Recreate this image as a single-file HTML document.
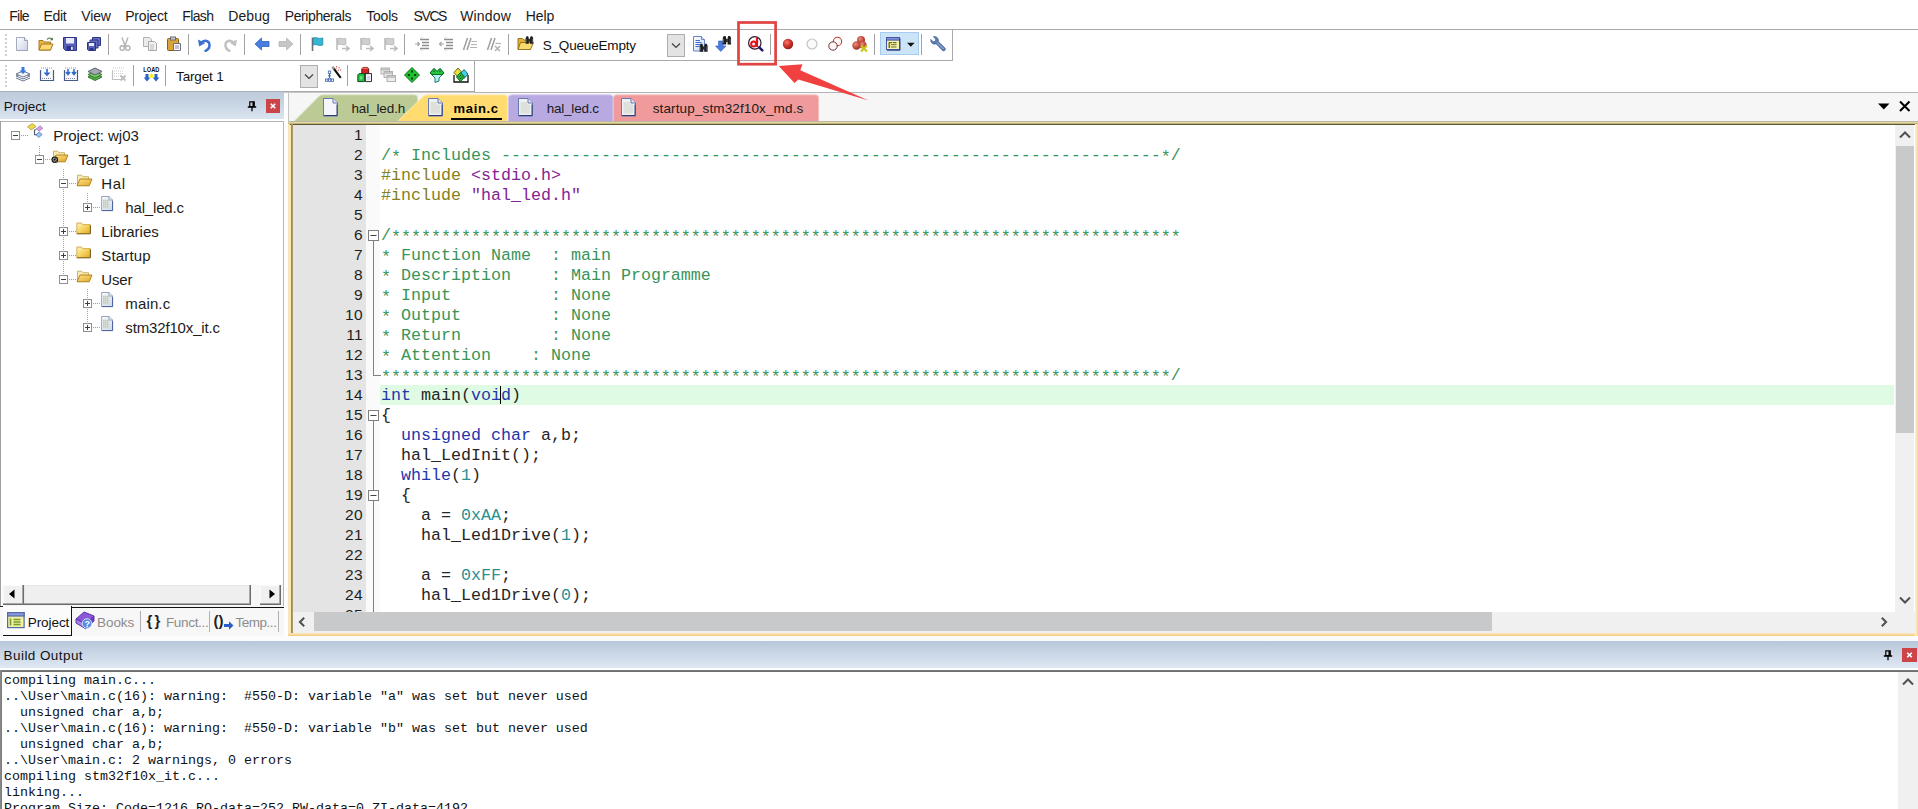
<!DOCTYPE html>
<html><head><meta charset="utf-8"><title>uVision</title><style>
html,body{margin:0;padding:0;background:#fff;}
body{width:1918px;height:809px;overflow:hidden;position:relative;font-family:"Liberation Sans",sans-serif;}
.t{position:absolute;white-space:pre;display:block;}
.b{position:absolute;display:block;box-sizing:border-box;}
.a{position:relative;top:2px;}
</style></head><body>
<svg width="0" height="0" style="position:absolute;left:0;top:0"><defs><linearGradient id="ng" x1="0" y1="0" x2="1" y2="1"><stop offset="0" stop-color="#fff"/><stop offset="1" stop-color="#cdd2e6"/></linearGradient><linearGradient id="dg" x1="0" y1="0" x2="1" y2="1"><stop offset="0" stop-color="#fff"/><stop offset="1" stop-color="#c4d8f6"/></linearGradient><radialGradient id="rb" cx=".38" cy=".35" r=".7"><stop offset="0" stop-color="#f08070"/><stop offset=".5" stop-color="#d0352c"/><stop offset="1" stop-color="#8e1a14"/></radialGradient><radialGradient id="rb2" cx=".38" cy=".35" r=".7"><stop offset="0" stop-color="#e89080"/><stop offset=".6" stop-color="#c4483c"/><stop offset="1" stop-color="#943024"/></radialGradient><linearGradient id="fo" x1="0" y1="0" x2="1" y2="1"><stop offset="0" stop-color="#fde58a"/><stop offset="1" stop-color="#e2a426"/></linearGradient><linearGradient id="fi" x1="0" y1="0" x2="1" y2="1"><stop offset="0" stop-color="#fbfcfe"/><stop offset="1" stop-color="#cfdaee"/></linearGradient><linearGradient id="fc" x1="0" y1="0" x2="1" y2="1"><stop offset="0" stop-color="#fff4c0"/><stop offset=".5" stop-color="#f6d560"/><stop offset="1" stop-color="#e4a82a"/></linearGradient></defs></svg>
<span class="t" style="left:9.20px;top:9.02px;font-size:14px;line-height:14px;color:#1a1a1a;letter-spacing:-0.715px;">File</span>
<span class="t" style="left:43.60px;top:9.02px;font-size:14px;line-height:14px;color:#1a1a1a;letter-spacing:-0.331px;">Edit</span>
<span class="t" style="left:81.20px;top:9.02px;font-size:14px;line-height:14px;color:#1a1a1a;letter-spacing:-0.098px;">View</span>
<span class="t" style="left:125.20px;top:9.02px;font-size:14px;line-height:14px;color:#1a1a1a;letter-spacing:-0.196px;">Project</span>
<span class="t" style="left:182.20px;top:9.02px;font-size:14px;line-height:14px;color:#1a1a1a;letter-spacing:-0.607px;">Flash</span>
<span class="t" style="left:228.20px;top:9.02px;font-size:14px;line-height:14px;color:#1a1a1a;letter-spacing:0.089px;">Debug</span>
<span class="t" style="left:284.80px;top:9.02px;font-size:14px;line-height:14px;color:#1a1a1a;letter-spacing:-0.420px;">Peripherals</span>
<span class="t" style="left:366.20px;top:9.02px;font-size:14px;line-height:14px;color:#1a1a1a;letter-spacing:-0.197px;">Tools</span>
<span class="t" style="left:413.60px;top:9.02px;font-size:14px;line-height:14px;color:#1a1a1a;letter-spacing:-1.431px;">SVCS</span>
<span class="t" style="left:460.20px;top:9.02px;font-size:14px;line-height:14px;color:#1a1a1a;letter-spacing:0.168px;">Window</span>
<span class="t" style="left:525.70px;top:9.02px;font-size:14px;line-height:14px;color:#1a1a1a;letter-spacing:-0.086px;">Help</span>
<div class="b" style="left:0px;top:29px;width:1918px;height:1px;background:#a9a9a9"></div>
<div class="b" style="left:0px;top:60px;width:953px;height:1px;background:#a9a9a9"></div>
<div class="b" style="left:952px;top:29px;width:1px;height:32px;background:#a9a9a9"></div>
<div class="b" style="left:0px;top:91px;width:474px;height:1px;background:#a9a9a9"></div>
<div class="b" style="left:474px;top:61px;width:1px;height:31px;background:#a9a9a9"></div>
<div class="b" style="left:474px;top:92px;width:1444px;height:1px;background:#b4b4b4"></div>
<div class="b" style="left:0px;top:92px;width:474px;height:1px;background:#c8c8c8"></div>
<div class="b" style="left:5px;top:34px;width:2px;height:2px;background:#cdcdcd"></div>
<div class="b" style="left:5px;top:38px;width:2px;height:2px;background:#cdcdcd"></div>
<div class="b" style="left:5px;top:42px;width:2px;height:2px;background:#cdcdcd"></div>
<div class="b" style="left:5px;top:46px;width:2px;height:2px;background:#cdcdcd"></div>
<div class="b" style="left:5px;top:50px;width:2px;height:2px;background:#cdcdcd"></div>
<div class="b" style="left:5px;top:54px;width:2px;height:2px;background:#cdcdcd"></div>
<div class="b" style="left:5px;top:65px;width:2px;height:2px;background:#cdcdcd"></div>
<div class="b" style="left:5px;top:69px;width:2px;height:2px;background:#cdcdcd"></div>
<div class="b" style="left:5px;top:73px;width:2px;height:2px;background:#cdcdcd"></div>
<div class="b" style="left:5px;top:77px;width:2px;height:2px;background:#cdcdcd"></div>
<div class="b" style="left:5px;top:81px;width:2px;height:2px;background:#cdcdcd"></div>
<div class="b" style="left:5px;top:85px;width:2px;height:2px;background:#cdcdcd"></div>
<div class="b" style="left:108px;top:34px;width:1px;height:21px;background:#a2a2a2"></div>
<div class="b" style="left:188px;top:34px;width:1px;height:21px;background:#a2a2a2"></div>
<div class="b" style="left:244px;top:34px;width:1px;height:21px;background:#a2a2a2"></div>
<div class="b" style="left:300px;top:34px;width:1px;height:21px;background:#a2a2a2"></div>
<div class="b" style="left:404px;top:34px;width:1px;height:21px;background:#a2a2a2"></div>
<div class="b" style="left:508px;top:34px;width:1px;height:21px;background:#a2a2a2"></div>
<div class="b" style="left:770px;top:34px;width:1px;height:21px;background:#a2a2a2"></div>
<div class="b" style="left:874px;top:34px;width:1px;height:21px;background:#a2a2a2"></div>
<div class="b" style="left:921px;top:34px;width:1px;height:21px;background:#a2a2a2"></div>
<div class="b" style="left:133px;top:65px;width:1px;height:21px;background:#a2a2a2"></div>
<div class="b" style="left:165px;top:65px;width:1px;height:21px;background:#a2a2a2"></div>
<div class="b" style="left:347px;top:65px;width:1px;height:21px;background:#a2a2a2"></div>
<svg class="b" style="left:14px;top:36px" width="16" height="16" viewBox="0 0 16 16"><path d="M2.5 1.500h8l3 3v10h-11z" fill="url(#ng)" stroke="#a4a9bc"/><path d="M10.5 1.500v3h3" fill="#eceff8" stroke="#9aa0b4"/><path d="M3 14.500h10.500v-9" fill="none" stroke="#9ea4bc"/></svg>
<svg class="b" style="left:38px;top:36px" width="16" height="16" viewBox="0 0 16 16"><path d="M1 4.5h4l1.5 1.5h6v8h-11.5z" fill="#e8b64a" stroke="#a87a1c"/><path d="M3.5 8h11.5l-2.5 6h-11.5z" fill="#fbd977" stroke="#a87a1c"/><path d="M9 3.5c1.5-2 4-2 5 0" fill="none" stroke="#3a6e3a" stroke-width="1.2"/><path d="M14.8 1.5v2.8h-2.8z" fill="#3a6e3a"/></svg>
<svg class="b" style="left:62px;top:36px" width="16" height="16" viewBox="0 0 16 16"><path d="M1.5 1.5h13v13h-11l-2-2z" fill="#5660b8" stroke="#2c3486"/><rect x="4" y="2" width="8" height="5.5" fill="#e8ecfb"/><rect x="4.5" y="10" width="7" height="4.5" fill="#2c3486"/><rect x="9" y="10.8" width="1.8" height="3" fill="#e8ecfb"/></svg>
<svg class="b" style="left:86px;top:36px" width="16" height="16" viewBox="0 0 16 16"><path d="M6.5 1.5h8v8h-8z" fill="#6870c0" stroke="#2c3486"/><path d="M4 4h8v8h-8z" fill="#6870c0" stroke="#2c3486"/><path d="M1.5 6.5h8v8h-7l-1-1z" fill="#5660b8" stroke="#2c3486"/><rect x="3" y="7" width="5" height="3" fill="#e8ecfb"/><rect x="3.5" y="12" width="4" height="2.5" fill="#2c3486"/></svg>
<svg class="b" style="left:117px;top:36px" width="16" height="16" viewBox="0 0 16 16"><path d="M5 1.5l3 8 3-8" fill="none" stroke="#b4b4b4" stroke-width="1.4"/><circle cx="5.2" cy="12" r="2.2" fill="none" stroke="#b4b4b4" stroke-width="1.4"/><circle cx="10.8" cy="12" r="2.2" fill="none" stroke="#b4b4b4" stroke-width="1.4"/><path d="M8 9.5l-2 1.2M8 9.5l2 1.2" stroke="#b4b4b4" stroke-width="1.4"/></svg>
<svg class="b" style="left:142px;top:36px" width="16" height="16" viewBox="0 0 16 16"><path d="M1.5 1.5h6l2 2v7h-8z" fill="#ececec" stroke="#b0b0b0"/><path d="M6.5 5.5h6l2 2v7h-8z" fill="#f2f2f2" stroke="#a8a8a8"/><path d="M8 9h4M8 11h4M8 13h4" stroke="#bcbcbc"/></svg>
<svg class="b" style="left:166px;top:36px" width="16" height="16" viewBox="0 0 16 16"><rect x="1.5" y="2.5" width="11" height="12" rx="1" fill="#d9a43a" stroke="#8a5d12"/><rect x="4.5" y="1" width="5" height="3" fill="#c8c8d0" stroke="#6c6c78"/><path d="M7.5 7.5h7v7h-7z" fill="#f6f6fa" stroke="#70707c"/><path d="M9 10h4M9 12h4" stroke="#8a8fb0"/></svg>
<svg class="b" style="left:197px;top:36px" width="16" height="16" viewBox="0 0 16 16"><path d="M4 7.5c3-4.5 9-3 8.5 2.5c-.3 2.5-2 4-4 4.8" fill="none" stroke="#3b6fd0" stroke-width="2.4" stroke-linecap="round"/><path d="M1 3.5l1.2 7 6-3.6z" fill="#3b6fd0"/></svg>
<svg class="b" style="left:222px;top:36px" width="16" height="16" viewBox="0 0 16 16"><path d="M12 7.5c-3-4.5-9-3-8.5 2.5c.3 2.5 2 4 4 4.8" fill="none" stroke="#c2c2c2" stroke-width="2.4" stroke-linecap="round"/><path d="M15 3.5l-1.2 7-6-3.6z" fill="#c2c2c2"/></svg>
<svg class="b" style="left:254px;top:36px" width="16" height="16" viewBox="0 0 16 16"><path d="M1 8l6.5-6v3.5h7.5v5h-7.5v3.500z" fill="#4a7fe0" stroke="#2f5fc0" stroke-width=".8"/></svg>
<svg class="b" style="left:278px;top:36px" width="16" height="16" viewBox="0 0 16 16"><path d="M15 8l-6.5-6v3.500h-7.500v5h7.500v3.500z" fill="#c6c6c6" stroke="#b6b6b6" stroke-width=".8"/></svg>
<svg class="b" style="left:309px;top:36px" width="16" height="16" viewBox="0 0 16 16"><path d="M3.5 1.500v13.5" stroke="#6a7078" stroke-width="1.6"/><path d="M4.3 2c3-1.5 5 1.5 9.5 0v7c-4.5 1.5-6.5-1.5-9.5 0z" fill="#35b6d2" stroke="#1c8aa6" stroke-width=".8"/></svg>
<svg class="b" style="left:334px;top:36px" width="16" height="16" viewBox="0 0 16 16"><path d="M3 2v12" stroke="#b8b8b8" stroke-width="1.5"/><path d="M3.8 2.500c2.5-1.2 4.5 1.2 8 0v6c-3.5 1.2-5.5-1.2-8 0z" fill="#cfcfcf" stroke="#b4b4b4" stroke-width=".8"/><path d="M8 12.500h7M12 10l3 2.5-3 2.5" fill="none" stroke="#bdbdbd" stroke-width="1.6"/></svg>
<svg class="b" style="left:358px;top:36px" width="16" height="16" viewBox="0 0 16 16"><path d="M3 2v12" stroke="#b8b8b8" stroke-width="1.5"/><path d="M3.8 2.500c2.5-1.2 4.5 1.2 8 0v6c-3.5 1.2-5.5-1.2-8 0z" fill="#cfcfcf" stroke="#b4b4b4" stroke-width=".8"/><path d="M8 12.500h7M12 10l3 2.5-3 2.5" fill="none" stroke="#bdbdbd" stroke-width="1.6"/></svg>
<svg class="b" style="left:382px;top:36px" width="16" height="16" viewBox="0 0 16 16"><path d="M3 2v12" stroke="#b8b8b8" stroke-width="1.5"/><path d="M3.8 2.500c2.5-1.2 4.5 1.2 8 0v6c-3.5 1.2-5.5-1.2-8 0z" fill="#cfcfcf" stroke="#b4b4b4" stroke-width=".8"/><path d="M8 12.500h7M12 10l3 2.5-3 2.5" fill="none" stroke="#bdbdbd" stroke-width="1.6"/></svg>
<svg class="b" style="left:414px;top:36px" width="16" height="16" viewBox="0 0 16 16"><path d="M6 3.500h9M8 6.500h7M8 9.500h7M6 12.500h9" stroke="#8e8e8e" stroke-width="1.3"/><path d="M1 8h4M3.5 6l2 2-2 2" fill="none" stroke="#a4a4a4" stroke-width="1.2"/><path d="M8 1v1M8 14v1" stroke="#c4c4c4"/></svg>
<svg class="b" style="left:438px;top:36px" width="16" height="16" viewBox="0 0 16 16"><path d="M6 3.500h9M8 6.500h7M8 9.500h7M6 12.500h9" stroke="#8e8e8e" stroke-width="1.3"/><path d="M6 8h-4M3.5 6l-2 2 2 2" fill="none" stroke="#a4a4a4" stroke-width="1.2"/><path d="M8 1v1M8 14v1" stroke="#c4c4c4"/></svg>
<svg class="b" style="left:462px;top:36px" width="16" height="16" viewBox="0 0 16 16"><path d="M1.5 14l4-12M5 14l4-12" stroke="#9e9e9e" stroke-width="1.5"/><path d="M9.5 5.500h5.500M9 8.500h6M8 11.500h7" stroke="#b4b4b4" stroke-width="1.2"/></svg>
<svg class="b" style="left:486px;top:36px" width="16" height="16" viewBox="0 0 16 16"><path d="M1.5 14l4-12M5 14l4-12" stroke="#9e9e9e" stroke-width="1.5"/><path d="M9.5 7.500h5.5" stroke="#b4b4b4" stroke-width="1.2"/><path d="M9 10l5 5M14 10l-5 5" stroke="#b0b0b0" stroke-width="1.5"/></svg>
<svg class="b" style="left:517px;top:35px" width="18" height="17" viewBox="0 0 18 17"><path d="M1 3.500h4.500l1.5 1.500h6.500v9h-12.500z" fill="#e2b43a" stroke="#8a6a14" stroke-width=".9"/><path d="M3.5 7.500h13l-3 7h-12.500z" fill="#f6dc6c" stroke="#8a6a14" stroke-width=".9"/><g transform="translate(7.5 1) scale(.95)"><path d="M1.2 2.200l1-2h1.600l.7 2v6h-3.300zM5.8 2.200l.7-2h1.600l1 2v6h-3.300z" fill="#1c1c1c"/><path d="M4 3h2v3h-2z" fill="#2a2a2a"/><path d="M1.8 3v4M8.2 3v4" stroke="#9a9a9a" stroke-width=".6"/></g></svg>
<span class="t" style="left:542.70px;top:39.02px;font-size:13.5px;line-height:13.5px;color:#111;letter-spacing:-0.176px;">S_QueueEmpty</span>
<div class="b" style="left:667px;top:34px;width:18px;height:23px;background:#e3e3e3;border:1px solid #adadad"></div>
<svg class="b" style="left:670px;top:41px" width="12" height="9" viewBox="0 0 12 9"><path d="M2 2.500l4 4 4-4" fill="none" stroke="#404040" stroke-width="1.2"/></svg>
<svg class="b" style="left:692px;top:36px" width="17" height="16" viewBox="0 0 17 16"><path d="M1.5 .5h8l3 3v11.500h-11z" fill="url(#dg)" stroke="#6a86c0"/><path d="M9.5 .5v3h3" fill="#e4ecfa" stroke="#6a86c0"/><path d="M3.5 4.500h4.500M3.5 6.500h6M3.5 8.500h5M3.5 10.500h4" stroke="#3e6cd0" stroke-width="1.1"/><g transform="translate(6.5 7.5)"><path d="M1.2 2.2l1-2h1.6l.7 2v6h-3.300zM5.8 2.200l.7-2h1.600l1 2v6h-3.300z" fill="#1c1c1c"/><path d="M4 3h2v3h-2z" fill="#2a2a2a"/><path d="M1.8 3v4M8.2 3v4" stroke="#8a8a8a" stroke-width=".6"/></g></svg>
<svg class="b" style="left:715px;top:35px" width="17" height="17" viewBox="0 0 17 17"><path d="M3.5 6h4.500v5h3l-5.250 5.5-5.250-5.500h3z" fill="#4a7ade" stroke="#3260c0" stroke-width=".6"/><g transform="translate(6.5 .8) scale(1.050)"><path d="M1.2 2.2l1-2h1.6l.7 2v6h-3.300zM5.8 2.200l.7-2h1.600l1 2v6h-3.300z" fill="#1c1c1c"/><path d="M4 3h2v3h-2z" fill="#2a2a2a"/><path d="M1.8 3v4M8.2 3v4" stroke="#8a8a8a" stroke-width=".6"/></g></svg>
<svg class="b" style="left:746px;top:34px" width="18" height="18" viewBox="0 0 18 18"><circle cx="8.8" cy="8.9" r="6.2" fill="#fff" stroke="#33182e" stroke-width="1.2"/><path d="M13.3 13.3l3 3" stroke="#221a6a" stroke-width="2.6" stroke-linecap="round"/><circle cx="7.6" cy="10" r="2.5" fill="#fbe6e6" stroke="#e0141c" stroke-width="2"/><path d="M11 3.6v9.3" stroke="#e0141c" stroke-width="2.2"/></svg>
<svg class="b" style="left:781px;top:37px" width="14" height="14" viewBox="0 0 14 14"><circle cx="7" cy="7" r="5.2" fill="url(#rb)"/></svg>
<svg class="b" style="left:805px;top:37px" width="14" height="14" viewBox="0 0 14 14"><circle cx="7" cy="7" r="5" fill="#fafafa" stroke="#c4c4c4" stroke-width="1.2"/></svg>
<svg class="b" style="left:827px;top:36px" width="17" height="16" viewBox="0 0 17 16"><circle cx="10.5" cy="5.5" r="4.2" fill="#fff8f4" stroke="#c03838" stroke-width="1.1"/><circle cx="6" cy="10" r="4.2" fill="#fff8f8" stroke="#6e3434" stroke-width="1"/></svg>
<svg class="b" style="left:851px;top:35px" width="18" height="18" viewBox="0 0 18 18"><circle cx="10" cy="5" r="4" fill="url(#rb2)"/><circle cx="5.5" cy="10.5" r="4.2" fill="url(#rb2)"/><circle cx="12" cy="10" r="3.6" fill="url(#rb2)"/><path d="M10 10.500l6 6M16 10.500l-6 6" stroke="#c8c818" stroke-width="2.2"/></svg>
<div class="b" style="left:880px;top:32px;width:39px;height:23px;background:#cce4f7;border:1px solid #a6cdf0"></div>
<svg class="b" style="left:885px;top:36px" width="16" height="15" viewBox="0 0 16 15"><rect x="1.5" y="1.5" width="13" height="12" fill="#f4f4b4" stroke="#4656a0" stroke-width="1"/><rect x="1.5" y="1.5" width="13" height="2.6" fill="#8292da" stroke="#4656a0" stroke-width="1"/><path d="M4.3 6v6" stroke="#7c7c10" stroke-width="1.6"/><path d="M4.3 6.600h3M6 8.800h5.500M6 11h5.500M8 6.600h3.5" stroke="#6c6c18" stroke-width="1.1"/><path d="M2 14.300h13v-12" fill="none" stroke="#2c3a80" stroke-width=".9"/></svg>
<svg class="b" style="left:906px;top:42px" width="10" height="6" viewBox="0 0 10 6"><path d="M1 .8h7.600l-3.8 4z" fill="#111"/></svg>
<svg class="b" style="left:930px;top:36px" width="16" height="16" viewBox="0 0 16 16"><path d="M3.4 .8L5.8 3.200L5.3 5.300L3.2 5.800L.8 3.400A3.9 3.9 0 0 0 6.1 7.800L12.5 14.400A1.7 1.7 0 0 0 14.9 12L8.3 5.600A3.9 3.9 0 0 0 3.4 .8z" fill="#5c7eb6" stroke="#3c5c94" stroke-width=".7"/><path d="M7.5 7l5.8 5.8" stroke="#a4bce0" stroke-width="1" stroke-linecap="round"/></svg>
<svg class="b" style="left:15px;top:66px" width="16" height="16" viewBox="0 0 16 16"><path d="M1 10l7-3 7 3-7 3z" fill="#fff" stroke="#6a7890"/><path d="M1 12l7 3 7-3" fill="none" stroke="#6a7890"/><path d="M1 8l7-3 7 3-7 3z" fill="#f4f6fa" stroke="#6a7890"/><path d="M6.5 1h3v3.500h2l-3.5 3.5-3.5-3.500h2z" fill="#3c78d8"/></svg>
<svg class="b" style="left:39px;top:66px" width="16" height="16" viewBox="0 0 16 16"><path d="M1.5 4v10.500h13v-10.5" fill="#f8fafc" stroke="#4a5a88" stroke-width="1.2"/><path d="M3 12.500h10" stroke="#7a86a8" stroke-dasharray="1 1"/><path d="M2 2h12" stroke="#8a96b8" stroke-dasharray="1 1"/><path d="M8 3v5M5.5 6.500l2.5 2.5 2.5-2.5" fill="none" stroke="#2c68c8" stroke-width="1.6"/></svg>
<svg class="b" style="left:63px;top:66px" width="16" height="16" viewBox="0 0 16 16"><path d="M1.5 4v10.500h13v-10.5" fill="#f8fafc" stroke="#4a5a88" stroke-width="1.2"/><path d="M3 12.500h10" stroke="#7a86a8" stroke-dasharray="1 1"/><path d="M2 2h12" stroke="#8a96b8" stroke-dasharray="1 1"/><path d="M5 3v4.500M3 6l2 2.5 2-2.500M11 3v4.500M9 6l2 2.5 2-2.5" fill="none" stroke="#2c68c8" stroke-width="1.5"/></svg>
<svg class="b" style="left:87px;top:66px" width="16" height="16" viewBox="0 0 16 16"><path d="M1 11l7-3 7 3-7 3.500z" fill="#5ab04a" stroke="#2e7a28"/><path d="M1 8.500l7-3 7 3-7 3.500z" fill="#7cc868" stroke="#2e7a28"/><path d="M1 5.500l7-3.5 7 3.5-7 3.500z" fill="#a4aab0" stroke="#5a6068"/></svg>
<svg class="b" style="left:111px;top:66px" width="16" height="16" viewBox="0 0 16 16"><path d="M1.5 4v9.500h10" fill="none" stroke="#c0c0c0" stroke-width="1.2"/><path d="M2 2h12M3 5h10M3 7.500h10M3 10h8" stroke="#cacaca" stroke-dasharray="1 1"/><path d="M9.5 9.500l5 5M14.5 9.500l-5 5" stroke="#bcbcbc" stroke-width="1.8"/></svg>
<svg class="b" style="left:143px;top:66px" width="17" height="17" viewBox="0 0 17 17"><text x="0.3" y="6" font-family="Liberation Sans" font-weight="bold" font-size="6.3" fill="#101010" textLength="16" lengthAdjust="spacingAndGlyphs">LOAD</text><path d="M2.5 8h3v3.500h1.800l-3.3 4-3.3-4h1.800zM11.5 8h3v3.500h1.800l-3.3 4-3.3-4h1.800z" fill="#2a62c8"/><path d="M8.5 6.500l1 2 2 .5-1.6 1.3.5 2.2-1.9-1.2-1.9 1.2.5-2.2-1.6-1.3 2-.5z" fill="#f4f020"/></svg>
<span class="t" style="left:176.10px;top:70.02px;font-size:13.5px;line-height:13.5px;color:#111;letter-spacing:-0.173px;">Target 1</span>
<div class="b" style="left:300px;top:65px;width:18px;height:23px;background:#e3e3e3;border:1px solid #adadad"></div>
<svg class="b" style="left:303px;top:72px" width="12" height="9" viewBox="0 0 12 9"><path d="M2 2.500l4 4 4-4" fill="none" stroke="#404040" stroke-width="1.2"/></svg>
<svg class="b" style="left:325px;top:66px" width="17" height="16" viewBox="0 0 17 16"><path d="M8.2 1.800l7.5 10" stroke="#101010" stroke-width="2.1"/><path d="M7.3 .6l1.8 2.4" stroke="#9a9a9a" stroke-width="2.1"/><path d="M11 .8h1.200M13.5 1.800h1.200M15 4h1.200M12.8 4.200h1.200M10.5 2.800h1" stroke="#d83a3a" stroke-width="1.1"/><path d="M4.5 7v5M4.5 12l-3 2M4.5 12l3 2" stroke="#3a62b0" stroke-width=".9" fill="none"/><rect x="3.3" y="5" width="2.4" height="2.4" fill="#fff" stroke="#3a62b0" stroke-width=".8"/><path d="M4.5 8.300l1.5 1.5-1.5 1.5-1.5-1.500z" fill="#3a62b0"/><rect x=".5" y="13" width="2.3" height="2.3" fill="#fff" stroke="#3a62b0" stroke-width=".8"/><rect x="3.4" y="13" width="2.3" height="2.3" fill="#fff" stroke="#3a62b0" stroke-width=".8"/><rect x="6.3" y="13" width="2.3" height="2.3" fill="#fff" stroke="#3a62b0" stroke-width=".8"/></svg>
<svg class="b" style="left:357px;top:66px" width="16" height="17" viewBox="0 0 16 17"><path d="M4.8 3l1.2-1.600h4.500l1.2 1.600v5h-6.900z" fill="#d42222" stroke="#4a1010" stroke-width=".9"/><path d="M6 1.400h4.500l1.2 1.600h-6.900z" fill="#f06a5a"/><path d="M.8 9l1.2-1.400h5.600v8h-6.800z" fill="#22c242" stroke="#0c3c14" stroke-width=".9"/><path d="M8.4 7.600h6.100v8h-6.100z" fill="#f4f4fa" stroke="#181818" stroke-width=".9"/><rect x="10" y="10" width="3" height="3.8" fill="#dccff2"/><rect x="2.8" y="10.2" width="2.6" height="3.2" fill="#6ee07e"/></svg>
<svg class="b" style="left:380px;top:67px" width="16" height="16" viewBox="0 0 16 16"><rect x="1" y="1" width="8.5" height="6" fill="#e8e8e8" stroke="#b0b0b0"/><rect x="4" y="4.5" width="8.5" height="6" fill="#e8e8e8" stroke="#b0b0b0"/><rect x="7" y="8.5" width="8.5" height="6" fill="#ececec" stroke="#b0b0b0"/><path d="M1 2.500h8.500M4 6h8.500M7 10h8.5" stroke="#b8b8b8" stroke-width="1.4"/></svg>
<svg class="b" style="left:404px;top:67px" width="16" height="16" viewBox="0 0 16 16"><path d="M8 .5l7.5 7.5-7.5 7.5-7.5-7.500z" fill="#20c030" stroke="#0a7018"/><rect x="7" y="3.5" width="2" height="2" fill="#083c10"/><rect x="3.8" y="7" width="2" height="2" fill="#083c10"/><rect x="10.2" y="7" width="2" height="2" fill="#083c10"/><rect x="7" y="10.5" width="2" height="2" fill="#083c10"/></svg>
<svg class="b" style="left:429px;top:67px" width="16" height="16" viewBox="0 0 16 16"><path d="M1 6l4-4.5 3 3 3-3 4 4.5-5 5v3l-4 1.500v-4.500z" fill="#b8f0f0" stroke="#207878"/><path d="M1 6l4-4.5 3 3 3-3 4 4.5-2 1.500h-10z" fill="#28c840" stroke="#0a7018"/><path d="M4.5 4.500h1M10.5 4.500h1" stroke="#083c10" stroke-width="1.4"/></svg>
<svg class="b" style="left:453px;top:67px" width="16" height="16" viewBox="0 0 16 16"><path d="M1 8v7h14v-7" fill="#fff" stroke="#101010" stroke-width="1.3"/><path d="M5 1l4 4.5-4 4.5-4-4.500z" fill="#e8e040" stroke="#6a6a10"/><path d="M11 2.500l4 4.5-4 4.5-4-4.500z" fill="#40d0e8" stroke="#106878"/><path d="M7.5 5.500l4 4.5-4 4.5-4-4.500z" fill="#28c038" stroke="#0a6018"/><path d="M7 8.500h1M5.5 10h1M8.5 10h1M7 11.500h1" stroke="#083c10" stroke-width="1.2"/></svg>
<div class="b" style="left:0px;top:91px;width:284px;height:1px;background:#a9b1bd"></div>
<div class="b" style="left:0px;top:92px;width:284px;height:27px;background:linear-gradient(#bdcad9,#c8d5e4 45%,#dbe5f1)"></div>
<span class="t" style="left:3.80px;top:100.02px;font-size:13.5px;line-height:13.5px;color:#111;letter-spacing:-0.003px;">Project</span>
<svg class="b" style="left:247px;top:101px" width="11" height="11" viewBox="0 0 11 11"><path d="M2.8 .8h4.400v4.800h-4.400z" fill="none" stroke="#000" stroke-width="1.2"/><path d="M6.4 .8v4.8" stroke="#000" stroke-width="1.9"/><path d="M.8 6h8.4" stroke="#000" stroke-width="1.5"/><path d="M5 6.500v3.7" stroke="#000" stroke-width="1.3"/></svg>
<div class="b" style="left:266px;top:99px;width:14px;height:14px;background:#cc4448"></div>
<svg class="b" style="left:266px;top:99px" width="14" height="14" viewBox="0 0 14 14"><path d="M4.700 4.700l4.600 4.600M9.300 4.700l-4.600 4.600" stroke="#fff" stroke-width="1.600"/></svg>
<div class="b" style="left:0px;top:119px;width:284px;height:3px;background:#fff"></div>
<div class="b" style="left:0px;top:121px;width:284px;height:1px;background:#b4b4b4"></div>
<div class="b" style="left:283px;top:121px;width:1px;height:486px;background:#b8b8b8"></div>
<div class="b" style="left:0px;top:121px;width:1px;height:486px;background:#a0a0a0"></div>
<div class="b" style="left:284px;top:93px;width:4px;height:550px;background:#fdfdfd"></div>
<div class="b" style="left:39px;top:146px;width:1px;height:9px;background:repeating-linear-gradient(180deg,#a0a0a0 0 1px,transparent 1px 2px)"></div>
<div class="b" style="left:63px;top:169px;width:1px;height:107px;background:repeating-linear-gradient(180deg,#a0a0a0 0 1px,transparent 1px 2px)"></div>
<div class="b" style="left:87px;top:193px;width:1px;height:10px;background:repeating-linear-gradient(180deg,#a0a0a0 0 1px,transparent 1px 2px)"></div>
<div class="b" style="left:87px;top:289px;width:1px;height:34px;background:repeating-linear-gradient(180deg,#a0a0a0 0 1px,transparent 1px 2px)"></div>
<div class="b" style="left:21px;top:135px;width:7px;height:1px;background:repeating-linear-gradient(90deg,#a0a0a0 0 1px,transparent 1px 2px)"></div>
<svg class="b" style="left:11px;top:131px" width="9" height="9" viewBox="0 0 9 9"><rect x=".5" y=".5" width="8" height="8" fill="#fff" stroke="#919191"/><path d="M2 4.500h5" stroke="#404040"/></svg>
<svg class="b" style="left:26px;top:123px" width="18" height="17" viewBox="0 0 18 17"><path d="M1.5 3.800l4.8-3.3 3.7 3-4.8 3.300z" fill="#ecd84a" stroke="#a09020" stroke-width=".7"/><path d="M10.5 5.800l3.6-3 2.6 2.4-3.6 3z" fill="#d8a0e8" stroke="#9a62b4" stroke-width=".7"/><path d="M9.8 11.800l3.4-2.8 3 2.6-3.4 2.800z" fill="#9cc0f0" stroke="#4a74b8" stroke-width=".7"/><path d="M8.5 6.500v5.300h2" fill="none" stroke="#4a5a70" stroke-width="1.1"/><path d="M8.5 7.500l2-1.5" stroke="#4a5a70" stroke-width="1"/></svg>
<span class="t" style="left:53.30px;top:128.02px;font-size:15px;line-height:15px;color:#1c1c1c;letter-spacing:-0.029px;">Project: wj03</span>
<div class="b" style="left:45px;top:159px;width:7px;height:1px;background:repeating-linear-gradient(90deg,#a0a0a0 0 1px,transparent 1px 2px)"></div>
<svg class="b" style="left:35px;top:155px" width="9" height="9" viewBox="0 0 9 9"><rect x=".5" y=".5" width="8" height="8" fill="#fff" stroke="#919191"/><path d="M2 4.500h5" stroke="#404040"/></svg>
<svg class="b" style="left:51px;top:150px" width="18" height="14" viewBox="0 0 18 14"><g transform="translate(1 0)"><path d="M1.5 1.200h4.200l1.3 1.500h5.500v8h-11z" fill="#f8ecb4" stroke="#c9ab52" stroke-width=".9"/><path d="M4 5h12l-2.8 6.800h-12.200z" fill="url(#fo)" stroke="#a87c18" stroke-width=".9"/></g><circle cx="3.8" cy="9.8" r="3.3" fill="#181818"/><path d="M1.5 9.800h4.600M3.8 7.500v4.600M2.2 8.200l3.2 3.200M5.4 8.200l-3.2 3.2" stroke="#f0f0f0" stroke-width=".7"/><circle cx="3.8" cy="9.8" r="1" fill="#181818"/></svg>
<span class="t" style="left:78.40px;top:152.02px;font-size:15px;line-height:15px;color:#1c1c1c;letter-spacing:-0.225px;">Target 1</span>
<div class="b" style="left:69px;top:183px;width:7px;height:1px;background:repeating-linear-gradient(90deg,#a0a0a0 0 1px,transparent 1px 2px)"></div>
<svg class="b" style="left:59px;top:179px" width="9" height="9" viewBox="0 0 9 9"><rect x=".5" y=".5" width="8" height="8" fill="#fff" stroke="#919191"/><path d="M2 4.500h5" stroke="#404040"/></svg>
<svg class="b" style="left:76px;top:174px" width="17" height="13" viewBox="0 0 17 13"><path d="M1.5 1.200h4.200l1.3 1.500h5.500v8h-11z" fill="#f8ecb4" stroke="#c9ab52" stroke-width=".9"/><path d="M4 5h12l-2.8 6.800h-12.200z" fill="url(#fo)" stroke="#a87c18" stroke-width=".9"/></svg>
<span class="t" style="left:101.30px;top:176.02px;font-size:15px;line-height:15px;color:#1c1c1c;letter-spacing:0.697px;">Hal</span>
<div class="b" style="left:93px;top:207px;width:7px;height:1px;background:repeating-linear-gradient(90deg,#a0a0a0 0 1px,transparent 1px 2px)"></div>
<svg class="b" style="left:83px;top:203px" width="9" height="9" viewBox="0 0 9 9"><rect x=".5" y=".5" width="8" height="8" fill="#fff" stroke="#919191"/><path d="M2 4.500h5" stroke="#404040"/><path d="M4.5 2v5" stroke="#404040"/></svg>
<svg class="b" style="left:101px;top:196px" width="13" height="16" viewBox="0 0 13 16"><path d="M.6 .5h7.400l3.5 3.500v10.500h-10.900z" fill="url(#fi)" stroke="#8a98b8" stroke-width=".9"/><path d="M8 .5v3.500h3.5" fill="#e8edf6" stroke="#8a98b8" stroke-width=".9"/><rect x="2" y="3.5" width="6" height="9" fill="#d4d9d2"/><path d="M2 4.500h6M2 6.500h6M2 8.500h6M2 10.500h6" stroke="#bcc4bc" stroke-dasharray="1 1"/><path d="M1 14.600h10.600v-9.5" fill="none" stroke="#4c5e9c" stroke-width="1"/></svg>
<span class="t" style="left:125.30px;top:200.02px;font-size:15px;line-height:15px;color:#1c1c1c;letter-spacing:-0.161px;">hal_led.c</span>
<div class="b" style="left:69px;top:231px;width:7px;height:1px;background:repeating-linear-gradient(90deg,#a0a0a0 0 1px,transparent 1px 2px)"></div>
<svg class="b" style="left:59px;top:227px" width="9" height="9" viewBox="0 0 9 9"><rect x=".5" y=".5" width="8" height="8" fill="#fff" stroke="#919191"/><path d="M2 4.500h5" stroke="#404040"/><path d="M4.5 2v5" stroke="#404040"/></svg>
<svg class="b" style="left:76px;top:222px" width="16" height="13" viewBox="0 0 16 13"><path d="M.8 1h4.700l1.3 1.600h7.400v9h-13.400z" fill="url(#fc)" stroke="#c6a040" stroke-width=".8"/><path d="M.8 11.800h13.600v-8.5" fill="none" stroke="#7c5c1c" stroke-width="1"/></svg>
<span class="t" style="left:101.30px;top:224.02px;font-size:15px;line-height:15px;color:#1c1c1c;letter-spacing:-0.014px;">Libraries</span>
<div class="b" style="left:69px;top:255px;width:7px;height:1px;background:repeating-linear-gradient(90deg,#a0a0a0 0 1px,transparent 1px 2px)"></div>
<svg class="b" style="left:59px;top:251px" width="9" height="9" viewBox="0 0 9 9"><rect x=".5" y=".5" width="8" height="8" fill="#fff" stroke="#919191"/><path d="M2 4.500h5" stroke="#404040"/><path d="M4.5 2v5" stroke="#404040"/></svg>
<svg class="b" style="left:76px;top:246px" width="16" height="13" viewBox="0 0 16 13"><path d="M.8 1h4.700l1.3 1.600h7.400v9h-13.400z" fill="url(#fc)" stroke="#c6a040" stroke-width=".8"/><path d="M.8 11.800h13.600v-8.5" fill="none" stroke="#7c5c1c" stroke-width="1"/></svg>
<span class="t" style="left:101.30px;top:248.02px;font-size:15px;line-height:15px;color:#1c1c1c;letter-spacing:0.148px;">Startup</span>
<div class="b" style="left:69px;top:279px;width:7px;height:1px;background:repeating-linear-gradient(90deg,#a0a0a0 0 1px,transparent 1px 2px)"></div>
<svg class="b" style="left:59px;top:275px" width="9" height="9" viewBox="0 0 9 9"><rect x=".5" y=".5" width="8" height="8" fill="#fff" stroke="#919191"/><path d="M2 4.500h5" stroke="#404040"/></svg>
<svg class="b" style="left:76px;top:270px" width="17" height="13" viewBox="0 0 17 13"><path d="M1.5 1.200h4.200l1.3 1.500h5.500v8h-11z" fill="#f8ecb4" stroke="#c9ab52" stroke-width=".9"/><path d="M4 5h12l-2.8 6.800h-12.200z" fill="url(#fo)" stroke="#a87c18" stroke-width=".9"/></svg>
<span class="t" style="left:101.30px;top:272.02px;font-size:15px;line-height:15px;color:#1c1c1c;letter-spacing:-0.193px;">User</span>
<div class="b" style="left:93px;top:303px;width:7px;height:1px;background:repeating-linear-gradient(90deg,#a0a0a0 0 1px,transparent 1px 2px)"></div>
<svg class="b" style="left:83px;top:299px" width="9" height="9" viewBox="0 0 9 9"><rect x=".5" y=".5" width="8" height="8" fill="#fff" stroke="#919191"/><path d="M2 4.500h5" stroke="#404040"/><path d="M4.5 2v5" stroke="#404040"/></svg>
<svg class="b" style="left:101px;top:292px" width="13" height="16" viewBox="0 0 13 16"><path d="M.6 .5h7.400l3.5 3.500v10.500h-10.900z" fill="url(#fi)" stroke="#8a98b8" stroke-width=".9"/><path d="M8 .5v3.500h3.5" fill="#e8edf6" stroke="#8a98b8" stroke-width=".9"/><rect x="2" y="3.5" width="6" height="9" fill="#d4d9d2"/><path d="M2 4.500h6M2 6.500h6M2 8.500h6M2 10.500h6" stroke="#bcc4bc" stroke-dasharray="1 1"/><path d="M1 14.600h10.600v-9.5" fill="none" stroke="#4c5e9c" stroke-width="1"/></svg>
<span class="t" style="left:125.30px;top:296.02px;font-size:15px;line-height:15px;color:#1c1c1c;letter-spacing:0.137px;">main.c</span>
<div class="b" style="left:93px;top:327px;width:7px;height:1px;background:repeating-linear-gradient(90deg,#a0a0a0 0 1px,transparent 1px 2px)"></div>
<svg class="b" style="left:83px;top:323px" width="9" height="9" viewBox="0 0 9 9"><rect x=".5" y=".5" width="8" height="8" fill="#fff" stroke="#919191"/><path d="M2 4.500h5" stroke="#404040"/><path d="M4.5 2v5" stroke="#404040"/></svg>
<svg class="b" style="left:101px;top:316px" width="13" height="16" viewBox="0 0 13 16"><path d="M.6 .5h7.400l3.5 3.500v10.500h-10.900z" fill="url(#fi)" stroke="#8a98b8" stroke-width=".9"/><path d="M8 .5v3.500h3.5" fill="#e8edf6" stroke="#8a98b8" stroke-width=".9"/><rect x="2" y="3.5" width="6" height="9" fill="#d4d9d2"/><path d="M2 4.500h6M2 6.500h6M2 8.500h6M2 10.500h6" stroke="#bcc4bc" stroke-dasharray="1 1"/><path d="M1 14.600h10.600v-9.5" fill="none" stroke="#4c5e9c" stroke-width="1"/></svg>
<span class="t" style="left:125.30px;top:320.02px;font-size:15px;line-height:15px;color:#1c1c1c;letter-spacing:-0.151px;">stm32f10x_it.c</span>
<div class="b" style="left:2px;top:585px;width:281px;height:21px;background:#f6f6f6"></div>
<div class="b" style="left:3px;top:585px;width:21px;height:20px;background:#f0f0f0;box-shadow:inset -1px -1px 0 #6c6c6c,inset -2px -2px 0 #a8a8a8,inset 1px 1px 0 #fbfbfb"></div>
<svg class="b" style="left:8px;top:589px" width="8" height="10" viewBox="0 0 8 10"><path d="M6.5 .5v9l-5.5-4.500z" fill="#000"/></svg>
<div class="b" style="left:24px;top:585px;width:227px;height:20px;background:#efefef;box-shadow:inset -1px -1px 0 #6c6c6c,inset -2px -2px 0 #a8a8a8,inset 1px 1px 0 #e6e6e6"></div>
<div class="b" style="left:260px;top:585px;width:21px;height:20px;background:#f0f0f0;box-shadow:inset -1px -1px 0 #6c6c6c,inset -2px -2px 0 #a8a8a8,inset 1px 1px 0 #fbfbfb"></div>
<svg class="b" style="left:268px;top:589px" width="8" height="10" viewBox="0 0 8 10"><path d="M1.5 .5v9l5.5-4.500z" fill="#000"/></svg>
<div class="b" style="left:0px;top:606px;width:284px;height:37px;background:#f7f7f7"></div>
<div class="b" style="left:72px;top:607px;width:212px;height:1px;background:#111"></div>
<div class="b" style="left:3px;top:606px;width:69px;height:30px;background:#fbfbfb;border-right:1px solid #111;border-bottom:1px solid #111"></div>
<div class="b" style="left:0px;top:606px;width:3px;height:1px;background:#222"></div>
<svg class="b" style="left:7px;top:612px" width="18" height="17" viewBox="0 0 18 17"><rect x=".6" y=".6" width="16.5" height="15" fill="#eef0a8" stroke="#5868a8" stroke-width="1.2"/><rect x=".6" y=".6" width="16.5" height="3.4" fill="#8898d8" stroke="#5868a8" stroke-width="1.2"/><path d="M3.5 6.500v7M6.5 7.500h7M6.5 10h7M6.5 12.500h7" stroke="#7a9a20" stroke-width="1.6" fill="none"/></svg>
<span class="t" style="left:27.70px;top:616.02px;font-size:13.5px;line-height:13.5px;color:#111;letter-spacing:-0.060px;">Project</span>
<svg class="b" style="left:74px;top:610px" width="22" height="22" viewBox="0 0 22 22"><path d="M2 9l8-7 10 4-8 8z" fill="#8a58d8" stroke="#5a34a8"/><path d="M2 9v4l10 6v-5z" fill="#a880e8" stroke="#5a34a8"/><path d="M12 14v5l8-8v-5z" fill="#6a44b8" stroke="#5a34a8"/><circle cx="13" cy="13.5" r="4.8" fill="#5888e0" stroke="#d8e4f8"/><text x="10.6" y="17" font-size="9" font-weight="bold" fill="#fff" font-family="Liberation Sans">?</text></svg>
<span class="t" style="left:97.00px;top:616.02px;font-size:13.5px;line-height:13.5px;color:#8c8c8c;letter-spacing:-0.064px;">Books</span>
<div class="b" style="left:140px;top:611px;width:1px;height:21px;background:#b0b0b0"></div>
<span class="t" style="left:146.50px;top:613.02px;font-size:15px;line-height:15px;color:#222;letter-spacing:2.163px;font-weight:bold;">{}</span>
<span class="t" style="left:165.90px;top:616.02px;font-size:13.5px;line-height:13.5px;color:#8c8c8c;letter-spacing:-0.314px;">Funct...</span>
<div class="b" style="left:209px;top:611px;width:1px;height:21px;background:#b0b0b0"></div>
<span class="t" style="left:213.50px;top:613.02px;font-size:15px;line-height:15px;color:#222;letter-spacing:0.004px;font-weight:bold;">()</span>
<svg class="b" style="left:224px;top:621px" width="10" height="9" viewBox="0 0 10 9"><path d="M0 3h5v-2.800l4.5 4.3-4.5 4.300v-2.800h-5z" fill="#2c60c8"/></svg>
<span class="t" style="left:235.50px;top:616.02px;font-size:13.5px;line-height:13.5px;color:#8c8c8c;letter-spacing:-0.481px;">Temp...</span>
<div class="b" style="left:278px;top:611px;width:1px;height:21px;background:#b0b0b0"></div>
<div class="b" style="left:288px;top:93px;width:1630px;height:29px;background:#f6f6f6"></div>
<div class="b" style="left:288px;top:93px;width:1px;height:29px;background:#c4c4c4"></div>
<svg class="b" style="left:288px;top:93px" width="540" height="29" viewBox="0 0 540 29"><path d="M6 28.500L30.8 3.600q1.7-1.7 4-1.700h91.700q3 0 3 3v23.600z" fill="#bccb96" stroke="#d4dfba" stroke-width="1"/><path d="M220.5 28.500v-23.600q0-3 3.5-3h98q3 0 3 3v23.600z" fill="#b9a9e1" stroke="#cfc4ea" stroke-width="1"/><path d="M325.5 28.500v-23.600q0-3 3.5-3h198.500q3 0 3 3v23.600z" fill="#f09a9c" stroke="#f4bcbc" stroke-width="1"/><path d="M109.5 28.500L135 3.600q1.7-1.7 4-1.700h77q3.5 0 3.5 3v23.600z" fill="#ffdb70" stroke="#ffe9a8" stroke-width="1"/></svg>
<svg class="b" style="left:323px;top:98px" width="16" height="19" viewBox="0 0 16 19"><path d="M.5 .5h9.500l4.5 4.500v13h-14z" fill="#f4f6fc" stroke="#5a6ea8" stroke-width=".9"/><path d="M10 .5v4.500h4.5" fill="#dfe5f4" stroke="#5a6ea8" stroke-width=".9"/><path d="M1.2 17.500h12.800v-11" fill="none" stroke="#2c3c78" stroke-width="1"/></svg>
<svg class="b" style="left:428px;top:98px" width="16" height="19" viewBox="0 0 16 19"><path d="M.5 .5h9.500l4.5 4.500v13h-14z" fill="#eef0f4" stroke="#5a6ea8" stroke-width=".9"/><path d="M10 .5v4.500h4.5" fill="#dfe5f4" stroke="#5a6ea8" stroke-width=".9"/><path d="M1.2 17.500h12.800v-11" fill="none" stroke="#2c3c78" stroke-width="1"/><path d="M2.5 4h6.500v2.500h3v9h-9.500z" fill="#dcdfd8" opacity=".9"/></svg>
<svg class="b" style="left:518px;top:98px" width="16" height="19" viewBox="0 0 16 19"><path d="M.5 .5h9.500l4.5 4.500v13h-14z" fill="#eef0f4" stroke="#5a6ea8" stroke-width=".9"/><path d="M10 .5v4.500h4.5" fill="#dfe5f4" stroke="#5a6ea8" stroke-width=".9"/><path d="M1.2 17.500h12.800v-11" fill="none" stroke="#2c3c78" stroke-width="1"/><path d="M2.5 4h6.500v2.500h3v9h-9.500z" fill="#dcdfd8" opacity=".9"/></svg>
<svg class="b" style="left:621px;top:98px" width="16" height="19" viewBox="0 0 16 19"><path d="M.5 .5h9.500l4.5 4.500v13h-14z" fill="#eef0f4" stroke="#5a6ea8" stroke-width=".9"/><path d="M10 .5v4.500h4.5" fill="#dfe5f4" stroke="#5a6ea8" stroke-width=".9"/><path d="M1.2 17.500h12.800v-11" fill="none" stroke="#2c3c78" stroke-width="1"/><path d="M2.5 4h6.500v2.500h3v9h-9.500z" fill="#dcdfd8" opacity=".9"/></svg>
<span class="t" style="left:351.40px;top:102.02px;font-size:13.5px;line-height:13.5px;color:#1a1a1a;letter-spacing:-0.111px;">hal_led.h</span>
<span class="t" style="left:453.60px;top:102.02px;font-size:13px;line-height:13px;color:#000;letter-spacing:0.636px;font-weight:bold;">main.c</span>
<div class="b" style="left:451px;top:118px;width:51px;height:2px;background:#000"></div>
<span class="t" style="left:546.70px;top:102.02px;font-size:13.5px;line-height:13.5px;color:#1a1a1a;letter-spacing:-0.216px;">hal_led.c</span>
<span class="t" style="left:652.70px;top:102.02px;font-size:13.5px;line-height:13.5px;color:#1a1a1a;letter-spacing:0.131px;">startup_stm32f10x_md.s</span>
<svg class="b" style="left:1877px;top:102px" width="14" height="9" viewBox="0 0 14 9"><path d="M1 1.500h11.500l-5.7 6z" fill="#000"/></svg>
<svg class="b" style="left:1898px;top:99px" width="14" height="14" viewBox="0 0 14 14"><path d="M2 2.500l9.5 9.500M11.5 2.500l-9.5 9.5" stroke="#000" stroke-width="2.1"/></svg>
<div class="b" style="left:288px;top:122px;width:1630px;height:515px;background:#f7e6b8"></div>
<div class="b" style="left:288px;top:121px;width:1630px;height:1px;background:#bdb5a8"></div>
<div class="b" style="left:288px;top:122px;width:1630px;height:1px;background:#e2da9e"></div>
<div class="b" style="left:288px;top:123px;width:1630px;height:1px;background:#beb67c"></div>
<div class="b" style="left:288px;top:633px;width:1630px;height:3px;background:linear-gradient(#fbe9c4,#f6c878)"></div>
<div class="b" style="left:290px;top:124px;width:1625px;height:1px;background:#5e5838"></div>
<div class="b" style="left:291px;top:124px;width:2px;height:509px;background:linear-gradient(90deg,#9a8258,#b8a070)"></div>
<div class="b" style="left:1915px;top:124px;width:3px;height:512px;background:linear-gradient(90deg,#fdf3d8,#f9d48c)"></div>
<div class="b" style="left:293px;top:125px;width:1622px;height:508px;background:#fff"></div>
<div class="b" style="left:293px;top:125px;width:73px;height:487px;background:#e4e4e4"></div>
<div class="b" style="left:366px;top:125px;width:14px;height:487px;background:#fafafa"></div>
<div class="b" style="left:380px;top:385px;width:1514px;height:20px;background:#dffbe3"></div>
<div class="b" style="left:1895px;top:125px;width:19px;height:487px;background:#f0f0f0"></div>
<div class="b" style="left:1896px;top:146px;width:18px;height:287px;background:#c8c9ca"></div>
<svg class="b" style="left:1898px;top:130px" width="14" height="10" viewBox="0 0 14 10"><path d="M2 7.500l5-5 5 5" fill="none" stroke="#505050" stroke-width="2"/></svg>
<svg class="b" style="left:1898px;top:595px" width="14" height="10" viewBox="0 0 14 10"><path d="M2 2.500l5 5 5-5" fill="none" stroke="#505050" stroke-width="2"/></svg>
<div class="b" style="left:293px;top:612px;width:1622px;height:21px;background:#f0f0f0"></div>
<div class="b" style="left:314px;top:612px;width:1178px;height:19px;background:#c8c9ca"></div>
<svg class="b" style="left:297px;top:615px" width="10" height="14" viewBox="0 0 10 14"><path d="M7.2 2.7l-4.3 4.3 4.3 4.3" fill="none" stroke="#505050" stroke-width="2"/></svg>
<svg class="b" style="left:1879px;top:615px" width="10" height="14" viewBox="0 0 10 14"><path d="M2.8 2.7l4.3 4.3-4.3 4.3" fill="none" stroke="#505050" stroke-width="2"/></svg>
<div class="b" style="left:293px;top:125px;width:1602px;height:487px;overflow:hidden">
<span class="t" style="left:61.08px;top:2.02px;font-size:15.5px;line-height:15.5px;color:#1e1e1e;letter-spacing:0.4px">1</span>
<span class="t" style="left:61.08px;top:22.02px;font-size:15.5px;line-height:15.5px;color:#1e1e1e;letter-spacing:0.4px">2</span>
<span class="t" style="left:88px;top:23.02px;font-family:'Liberation Mono',monospace;font-size:16.6667px;line-height:16.6667px"><span style="color:#37955a">/<span class="a">*</span> Includes ------------------------------------------------------------------<span class="a">*</span>/</span></span>
<span class="t" style="left:61.08px;top:42.02px;font-size:15.5px;line-height:15.5px;color:#1e1e1e;letter-spacing:0.4px">3</span>
<span class="t" style="left:88px;top:43.02px;font-family:'Liberation Mono',monospace;font-size:16.6667px;line-height:16.6667px"><span style="color:#84811e">#include </span><span style="color:#822494">&lt;stdio.h&gt;</span></span>
<span class="t" style="left:61.08px;top:62.02px;font-size:15.5px;line-height:15.5px;color:#1e1e1e;letter-spacing:0.4px">4</span>
<span class="t" style="left:88px;top:63.02px;font-family:'Liberation Mono',monospace;font-size:16.6667px;line-height:16.6667px"><span style="color:#84811e">#include </span><span style="color:#822494">&quot;hal_led.h&quot;</span></span>
<span class="t" style="left:61.08px;top:82.02px;font-size:15.5px;line-height:15.5px;color:#1e1e1e;letter-spacing:0.4px">5</span>
<span class="t" style="left:61.08px;top:102.02px;font-size:15.5px;line-height:15.5px;color:#1e1e1e;letter-spacing:0.4px">6</span>
<span class="t" style="left:88px;top:103.02px;font-family:'Liberation Mono',monospace;font-size:16.6667px;line-height:16.6667px"><span style="color:#37955a">/<span class="a">*******************************************************************************</span></span></span>
<span class="t" style="left:61.08px;top:122.02px;font-size:15.5px;line-height:15.5px;color:#1e1e1e;letter-spacing:0.4px">7</span>
<span class="t" style="left:88px;top:123.02px;font-family:'Liberation Mono',monospace;font-size:16.6667px;line-height:16.6667px"><span style="color:#37955a"><span class="a">*</span> Function Name  : main</span></span>
<span class="t" style="left:61.08px;top:142.02px;font-size:15.5px;line-height:15.5px;color:#1e1e1e;letter-spacing:0.4px">8</span>
<span class="t" style="left:88px;top:143.02px;font-family:'Liberation Mono',monospace;font-size:16.6667px;line-height:16.6667px"><span style="color:#37955a"><span class="a">*</span> Description    : Main Programme</span></span>
<span class="t" style="left:61.08px;top:162.02px;font-size:15.5px;line-height:15.5px;color:#1e1e1e;letter-spacing:0.4px">9</span>
<span class="t" style="left:88px;top:163.02px;font-family:'Liberation Mono',monospace;font-size:16.6667px;line-height:16.6667px"><span style="color:#37955a"><span class="a">*</span> Input          : None</span></span>
<span class="t" style="left:52.06px;top:182.02px;font-size:15.5px;line-height:15.5px;color:#1e1e1e;letter-spacing:0.4px">10</span>
<span class="t" style="left:88px;top:183.02px;font-family:'Liberation Mono',monospace;font-size:16.6667px;line-height:16.6667px"><span style="color:#37955a"><span class="a">*</span> Output         : None</span></span>
<span class="t" style="left:53.21px;top:202.02px;font-size:15.5px;line-height:15.5px;color:#1e1e1e;letter-spacing:0.4px">11</span>
<span class="t" style="left:88px;top:203.02px;font-family:'Liberation Mono',monospace;font-size:16.6667px;line-height:16.6667px"><span style="color:#37955a"><span class="a">*</span> Return         : None</span></span>
<span class="t" style="left:52.06px;top:222.02px;font-size:15.5px;line-height:15.5px;color:#1e1e1e;letter-spacing:0.4px">12</span>
<span class="t" style="left:88px;top:223.02px;font-family:'Liberation Mono',monospace;font-size:16.6667px;line-height:16.6667px"><span style="color:#37955a"><span class="a">*</span> Attention    : None</span></span>
<span class="t" style="left:52.06px;top:242.02px;font-size:15.5px;line-height:15.5px;color:#1e1e1e;letter-spacing:0.4px">13</span>
<span class="t" style="left:88px;top:243.02px;font-family:'Liberation Mono',monospace;font-size:16.6667px;line-height:16.6667px"><span style="color:#37955a"><span class="a">*******************************************************************************</span>/</span></span>
<span class="t" style="left:52.06px;top:262.02px;font-size:15.5px;line-height:15.5px;color:#1e1e1e;letter-spacing:0.4px">14</span>
<span class="t" style="left:88px;top:263.02px;font-family:'Liberation Mono',monospace;font-size:16.6667px;line-height:16.6667px"><span style="color:#2436ac">int</span><span style="color:#262626"> main(</span><span style="color:#2436ac">void</span><span style="color:#262626">)</span></span>
<span class="t" style="left:52.06px;top:282.02px;font-size:15.5px;line-height:15.5px;color:#1e1e1e;letter-spacing:0.4px">15</span>
<span class="t" style="left:88px;top:283.02px;font-family:'Liberation Mono',monospace;font-size:16.6667px;line-height:16.6667px"><span style="color:#262626">{</span></span>
<span class="t" style="left:52.06px;top:302.02px;font-size:15.5px;line-height:15.5px;color:#1e1e1e;letter-spacing:0.4px">16</span>
<span class="t" style="left:88px;top:303.02px;font-family:'Liberation Mono',monospace;font-size:16.6667px;line-height:16.6667px"><span style="color:#262626">  </span><span style="color:#2436ac">unsigned char</span><span style="color:#262626"> a,b;</span></span>
<span class="t" style="left:52.06px;top:322.02px;font-size:15.5px;line-height:15.5px;color:#1e1e1e;letter-spacing:0.4px">17</span>
<span class="t" style="left:88px;top:323.02px;font-family:'Liberation Mono',monospace;font-size:16.6667px;line-height:16.6667px"><span style="color:#262626">  hal_LedInit();</span></span>
<span class="t" style="left:52.06px;top:342.02px;font-size:15.5px;line-height:15.5px;color:#1e1e1e;letter-spacing:0.4px">18</span>
<span class="t" style="left:88px;top:343.02px;font-family:'Liberation Mono',monospace;font-size:16.6667px;line-height:16.6667px"><span style="color:#262626">  </span><span style="color:#2436ac">while</span><span style="color:#262626">(</span><span style="color:#2a9090">1</span><span style="color:#262626">)</span></span>
<span class="t" style="left:52.06px;top:362.02px;font-size:15.5px;line-height:15.5px;color:#1e1e1e;letter-spacing:0.4px">19</span>
<span class="t" style="left:88px;top:363.02px;font-family:'Liberation Mono',monospace;font-size:16.6667px;line-height:16.6667px"><span style="color:#262626">  {</span></span>
<span class="t" style="left:52.06px;top:382.02px;font-size:15.5px;line-height:15.5px;color:#1e1e1e;letter-spacing:0.4px">20</span>
<span class="t" style="left:88px;top:383.02px;font-family:'Liberation Mono',monospace;font-size:16.6667px;line-height:16.6667px"><span style="color:#262626">    a = </span><span style="color:#2a9090">0xAA</span><span style="color:#262626">;</span></span>
<span class="t" style="left:52.06px;top:402.02px;font-size:15.5px;line-height:15.5px;color:#1e1e1e;letter-spacing:0.4px">21</span>
<span class="t" style="left:88px;top:403.02px;font-family:'Liberation Mono',monospace;font-size:16.6667px;line-height:16.6667px"><span style="color:#262626">    hal_Led1Drive(</span><span style="color:#2a9090">1</span><span style="color:#262626">);</span></span>
<span class="t" style="left:52.06px;top:422.02px;font-size:15.5px;line-height:15.5px;color:#1e1e1e;letter-spacing:0.4px">22</span>
<span class="t" style="left:52.06px;top:442.02px;font-size:15.5px;line-height:15.5px;color:#1e1e1e;letter-spacing:0.4px">23</span>
<span class="t" style="left:88px;top:443.02px;font-family:'Liberation Mono',monospace;font-size:16.6667px;line-height:16.6667px"><span style="color:#262626">    a = </span><span style="color:#2a9090">0xFF</span><span style="color:#262626">;</span></span>
<span class="t" style="left:52.06px;top:462.02px;font-size:15.5px;line-height:15.5px;color:#1e1e1e;letter-spacing:0.4px">24</span>
<span class="t" style="left:88px;top:463.02px;font-family:'Liberation Mono',monospace;font-size:16.6667px;line-height:16.6667px"><span style="color:#262626">    hal_Led1Drive(</span><span style="color:#2a9090">0</span><span style="color:#262626">);</span></span>
<span class="t" style="left:52.06px;top:482.02px;font-size:15.5px;line-height:15.5px;color:#1e1e1e;letter-spacing:0.4px">25</span>
</div>
<div class="b" style="left:373px;top:241px;width:1px;height:135px;background:#808080"></div>
<div class="b" style="left:373px;top:375px;width:8px;height:1px;background:#808080"></div>
<div class="b" style="left:373px;top:421px;width:1px;height:191px;background:#808080"></div>
<svg class="b" style="left:368px;top:230px" width="11" height="11" viewBox="0 0 11 11"><rect x=".5" y=".5" width="10" height="10" fill="#fff" stroke="#808080"/><path d="M2.5 5.500h6" stroke="#404040"/></svg>
<svg class="b" style="left:368px;top:410px" width="11" height="11" viewBox="0 0 11 11"><rect x=".5" y=".5" width="10" height="10" fill="#fff" stroke="#808080"/><path d="M2.5 5.500h6" stroke="#404040"/></svg>
<svg class="b" style="left:368px;top:490px" width="11" height="11" viewBox="0 0 11 11"><rect x=".5" y=".5" width="10" height="10" fill="#fff" stroke="#808080"/><path d="M2.5 5.500h6" stroke="#404040"/></svg>
<div class="b" style="left:500px;top:386px;width:1px;height:18px;background:#000"></div>
<div class="b" style="left:0px;top:636px;width:1918px;height:5px;background:#fcfcfc"></div>
<div class="b" style="left:0px;top:641px;width:1918px;height:27px;background:linear-gradient(#b7c7d9,#c9d6e6 45%,#dfe8f4)"></div>
<span class="t" style="left:3.60px;top:649.02px;font-size:13.5px;line-height:13.5px;color:#111;letter-spacing:0.425px;">Build Output</span>
<svg class="b" style="left:1883px;top:650px" width="11" height="11" viewBox="0 0 11 11"><path d="M2.8 .8h4.400v4.800h-4.400z" fill="none" stroke="#000" stroke-width="1.2"/><path d="M6.4 .8v4.8" stroke="#000" stroke-width="1.9"/><path d="M.8 6h8.4" stroke="#000" stroke-width="1.5"/><path d="M5 6.500v3.7" stroke="#000" stroke-width="1.3"/></svg>
<div class="b" style="left:1902px;top:648px;width:15px;height:14px;background:#cc4448"></div>
<svg class="b" style="left:1902px;top:648px" width="15" height="14" viewBox="0 0 15 14"><path d="M5.2 4.700l4.600 4.600M9.800 4.700l-4.600 4.600" stroke="#fff" stroke-width="1.600"/></svg>
<div class="b" style="left:0px;top:668px;width:1918px;height:2px;background:#fff"></div>
<div class="b" style="left:0px;top:670px;width:1918px;height:2px;background:linear-gradient(#7c7c7c,#6c6c6c)"></div>
<div class="b" style="left:0px;top:672px;width:1918px;height:137px;background:#fff"></div>
<div class="b" style="left:0px;top:670px;width:2px;height:139px;background:linear-gradient(90deg,#8c8c8c,#787878)"></div>
<div class="b" style="left:1898px;top:672px;width:20px;height:137px;background:#f0f0f0"></div>
<svg class="b" style="left:1901px;top:677px" width="14" height="10" viewBox="0 0 14 10"><path d="M2 7.500l5-5 5 5" fill="none" stroke="#505050" stroke-width="2"/></svg>
<span class="t" style="left:4px;top:674.02px;font-family:'Liberation Mono',monospace;font-size:13.3333px;line-height:13.3333px;color:#111">compiling main.c...</span>
<span class="t" style="left:4px;top:690.02px;font-family:'Liberation Mono',monospace;font-size:13.3333px;line-height:13.3333px;color:#111">..\User\main.c(16): warning:  #550-D: variable &quot;a&quot; was set but never used</span>
<span class="t" style="left:4px;top:706.02px;font-family:'Liberation Mono',monospace;font-size:13.3333px;line-height:13.3333px;color:#111">  unsigned char a,b;</span>
<span class="t" style="left:4px;top:722.02px;font-family:'Liberation Mono',monospace;font-size:13.3333px;line-height:13.3333px;color:#111">..\User\main.c(16): warning:  #550-D: variable &quot;b&quot; was set but never used</span>
<span class="t" style="left:4px;top:738.02px;font-family:'Liberation Mono',monospace;font-size:13.3333px;line-height:13.3333px;color:#111">  unsigned char a,b;</span>
<span class="t" style="left:4px;top:754.02px;font-family:'Liberation Mono',monospace;font-size:13.3333px;line-height:13.3333px;color:#111">..\User\main.c: 2 warnings, 0 errors</span>
<span class="t" style="left:4px;top:770.02px;font-family:'Liberation Mono',monospace;font-size:13.3333px;line-height:13.3333px;color:#111">compiling stm32f10x_it.c...</span>
<span class="t" style="left:4px;top:786.02px;font-family:'Liberation Mono',monospace;font-size:13.3333px;line-height:13.3333px;color:#111">linking...</span>
<span class="t" style="left:4px;top:802.02px;font-family:'Liberation Mono',monospace;font-size:13.3333px;line-height:13.3333px;color:#111">Program Size: Code=1216 RO-data=252 RW-data=0 ZI-data=4192  </span>
<svg class="b" style="left:730px;top:15px" width="160" height="95" viewBox="0 0 160 95"><rect x="8.5" y="7.5" width="37.1" height="41.7" fill="none" stroke="#df4440" stroke-width="2.7"/><path d="M48.7 51L72.5 49.300L70.3 55.200L138.5 85.500L68.3 64.4L64.5 68z" fill="#f04040"/></svg>
</body></html>
